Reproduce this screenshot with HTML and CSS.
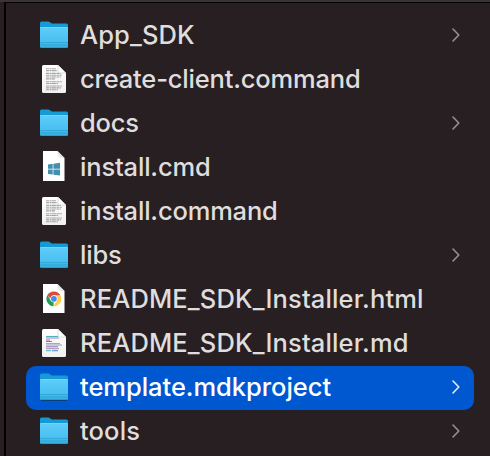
FILE: index.html
```html
<!DOCTYPE html>
<html lang="en">
<head>
<meta charset="utf-8">
<title>Files</title>
<link rel="stylesheet" href="styles.css">
</head>
<body>
<svg class="defs" aria-hidden="true">
  <defs>
    <linearGradient id="front" x1="0" y1="0" x2="0" y2="1"><stop offset="0" stop-color="#5fcdf9"/><stop offset=".65" stop-color="#4ac1f2"/><stop offset="1" stop-color="#34ade0"/></linearGradient>
    <linearGradient id="paper" x1="0" y1="0" x2="0" y2="1"><stop offset="0" stop-color="#fff"/><stop offset="1" stop-color="#f0f0f0"/></linearGradient>
    <linearGradient id="fold" x1="0" y1="1" x2="1" y2="0"><stop offset="0" stop-color="#fff"/><stop offset=".5" stop-color="#ddd"/><stop offset="1" stop-color="#aaa"/></linearGradient>
    <symbol id="folder" viewBox="0 0 32 36">
      <path d="M3 30.500h26" stroke="#120e12" stroke-opacity=".5"/>
      <path d="M2 5q0-1.500 1.500-1.500H10q1.300 0 2.300 1t2.200 1h14q1.500 0 1.500 1.500V28H2z" fill="#169ad5"/>
      <path d="M2 10q0-1 1-1h26q1 0 1 1V28.500q0 1.500-1.500 1.500h-25Q2 30 2 28.500z" fill="url(#front)"/>
      <path d="M2.500 9.500h27" stroke="#7bdcff" stroke-width=".6"/>
      <path d="M2 24.500h28M2 27h28" stroke="#2c9fd0" stroke-width=".7"/>
      <path d="M3 29.700h26" stroke="#1d8fc2" stroke-width=".7"/>
    </symbol>
    <symbol id="doc" viewBox="0 0 32 36">
      <path d="M4 4.500Q4 3 5.500 3H20l8 8v18.500q0 1.500-1.500 1.500h-21Q4 31 4 29.500z" fill="url(#paper)"/>
      <g stroke="#858585" stroke-width="1.150" stroke-dasharray="3.200 .5 1.800 .4 4 .5">
        <path d="M8 6.700h10M8 8.600h11M8 11.400h15M8 13.200h16M8 15h15M8 16.800h9M8 19.700h16M8 21.500h12M8 24h16M8 25.900h15M8 27.700h12" opacity=".72"/>
      </g>
      <path d="M20 3l8 8h-6.500Q20 11 20 9.500z" fill="#fff" stroke="#bbb" stroke-width=".5"/>
    </symbol>
    <symbol id="windows" viewBox="0 0 32 36">
      <path d="M5 1h14.500l7 7v23H5z" fill="#fff"/>
      <path d="M19.500 1l7 7h-5q-2 0-2-2z" fill="url(#fold)"/>
      <path d="M10 14.500l4.700-.7v4.900H10zM15.400 13.700l6.600-.9v5.900h-6.600zM10 19.500h4.700v5L10 23.900zM15.400 19.500H22v6.100l-6.600-.9z" fill="#438fad"/>
    </symbol>
    <symbol id="chrome" viewBox="0 0 32 36">
      <path d="M5 2h14.500l7 7v22H5z" fill="#fff"/>
      <path d="M19.500 2l7 7h-5q-2 0-2-2z" fill="url(#fold)"/>
      <path d="M15.800 16.800 15.500 24.300A7.500 7.500 0 0 1 9.400 13l3.400 5.500z" fill="#219d58"/>
      <path d="M15.800 13.300h6.600A7.500 7.500 0 0 1 15.500 24.300l3.400-5.800z" fill="#ffce43"/>
      <path d="M9.400 13a7.500 7.500 0 0 1 13 .3h-6.600l-3.300 3.500z" fill="#dc4a3e"/>
      <circle cx="15.900" cy="16.800" r="3.500" fill="#fff"/>
      <circle cx="15.900" cy="16.800" r="2.900" fill="#4688f4"/>
    </symbol>
    <symbol id="markdown" viewBox="0 0 32 36">
      <path d="M4 4.500Q4 3 5.500 3H20l8 8v18.500q0 1.500-1.500 1.500h-21Q4 31 4 29.500z" fill="url(#paper)"/>
      <g fill="none" stroke-width="1.100">
        <path d="M8 10.500h12" stroke="#50b4b0"/><path d="M8 12h13" stroke="#a391df"/>
        <path d="M8 14h4M8 15.500h6" stroke="#ea4c8c"/>
        <path d="M8 17.500h14M8 22.600h13" stroke="#b7a1b9"/>
        <path d="M8 19h16" stroke="#9da7ae"/><path d="M8 20.800h12" stroke="#8f7ed5"/>
        <path d="M8 24.700h5" stroke="#59b7c2"/><path d="M14 24.700h6" stroke="#5c8ad8"/>
      </g>
      <path d="M20 3l8 8h-6.500Q20 11 20 9.500z" fill="#fff" stroke="#bbb" stroke-width=".5"/>
    </symbol>
    <symbol id="chevron" viewBox="0 0 10 16"><path d="M2 2l5.800 6L2 14" fill="none" stroke="currentColor" stroke-width="1.600" stroke-linecap="round" stroke-linejoin="round"/></symbol>
  </defs>
</svg>
<main class="column">
  <ul class="list">
    <li class="row"><svg class="icon"><use href="#folder"/></svg><span class="name wide">App_SDK</span><svg class="chevron"><use href="#chevron"/></svg></li>
    <li class="row"><svg class="icon"><use href="#doc"/></svg><span class="name">create-client.command</span></li>
    <li class="row"><svg class="icon"><use href="#folder"/></svg><span class="name">docs</span><svg class="chevron"><use href="#chevron"/></svg></li>
    <li class="row"><svg class="icon"><use href="#windows"/></svg><span class="name">install.cmd</span></li>
    <li class="row"><svg class="icon"><use href="#doc"/></svg><span class="name">install.command</span></li>
    <li class="row"><svg class="icon"><use href="#folder"/></svg><span class="name">libs</span><svg class="chevron"><use href="#chevron"/></svg></li>
    <li class="row"><svg class="icon"><use href="#chrome"/></svg><span class="name wide">README_SDK_Installer.html</span></li>
    <li class="row"><svg class="icon"><use href="#markdown"/></svg><span class="name wide">README_SDK_Installer.md</span></li>
    <li class="row selected"><svg class="icon"><use href="#folder"/></svg><span class="name">template.mdkproject</span><svg class="chevron"><use href="#chevron"/></svg></li>
    <li class="row"><svg class="icon"><use href="#folder"/></svg><span class="name wide">tools</span><svg class="chevron"><use href="#chevron"/></svg></li>
  </ul>
</main>
</body>
</html>
```
FILE: styles.css
```css
* { box-sizing: border-box; }
body {
  margin: 0;
  height: 456px;
  overflow: hidden;
  background: #281f22;
  border-top: 2px solid #3b3437;
  padding-left: 4px;
  font-family: Inter, "Liberation Sans", sans-serif;
}
.defs { position: absolute; width: 0; height: 0; }
.column {
  height: 454px;
  border-top: 1px solid #000;
  border-left: 2px solid #000;
  padding: 11px 16px 0 20px;
}
.list { list-style: none; margin: 0; padding: 0; }
.row {
  display: flex;
  align-items: center;
  height: 44px;
  padding: 0 13px 0 12px;
  border-radius: 10px;
  color: #dfdddd;
}
.icon { width: 32px; height: 36px; flex: none; }
.name {
  margin: -3px 0 0 10px;
  font-size: 25.5px;
  font-weight: 450;
  line-height: 32px;
  letter-spacing: -0.18px;
  white-space: nowrap;
}
.wide { letter-spacing: 0.14px; }
.chevron { width: 10px; height: 16px; margin: -3px 0 0 auto; color: #969093; }
.selected { background: #0058d0; color: #fff; }
.selected .name { font-weight: 500; letter-spacing: -0.04px; }
.selected .chevron { color: #e0eafa; }
```
